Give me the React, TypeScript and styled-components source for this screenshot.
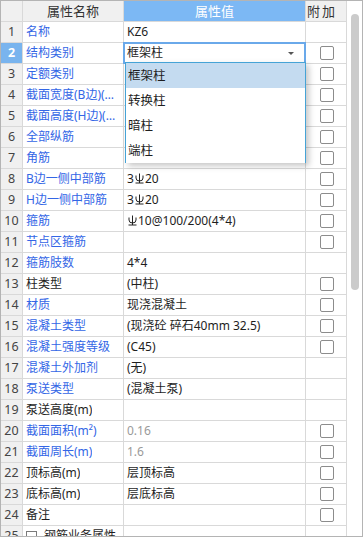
import React from 'react';
import styled, { createGlobalStyle } from 'styled-components';

const GlobalStyle = createGlobalStyle`
  html, body { margin: 0; padding: 0; background: #fff; }
  body {
    font-family: "Noto Sans", "Noto Sans CJK SC", sans-serif;
    font-size: 12px;
  }
  * { box-sizing: border-box; }
`;

const Frame = styled.div`
  position: relative;
  width: 363px;
  height: 537px;
  border: 1px solid #b4b4b4;
  display: flex;
  overflow: hidden;
  background: #fff;
`;

const Grid = styled.div`
  display: grid;
  grid-template-columns: 21px 100px 181px 40px;
  grid-auto-rows: 20px;
  gap: 1px;
  align-content: start;
  background: #d9d9d9;
  border-right: 1px solid #d9d9d9;
  flex: none;
`;

const Cell = styled.div`
  position: relative;
  background: #fff;
  line-height: 20px;
  white-space: nowrap;
  overflow: hidden;
  text-overflow: ellipsis;
  color: #1e1e1e;
`;

const HeaderCell = styled(Cell)<{ $accent?: boolean; $wide?: boolean }>`
  background: ${(p) => (p.$accent ? '#7cb8f4' : '#f0f0f0')};
  color: ${(p) => (p.$accent ? '#fff' : '#333')};
  font-size: 13px;
  text-align: ${(p) => (p.$wide ? 'left' : 'center')};
  padding-left: ${(p) => (p.$wide ? '1px' : '0')};
  letter-spacing: ${(p) => (p.$wide ? '2px' : '0')};
`;

const IndexCell = styled(Cell)<{ $selected?: boolean }>`
  background: ${(p) => (p.$selected ? '#79b4ee' : '#f0f0f0')};
  color: ${(p) => (p.$selected ? '#fff' : '#444')};
  font-weight: ${(p) => (p.$selected ? 700 : 400)};
  text-align: center;
  font-size: 12.5px;
`;

const NameCell = styled(Cell)<{ $blue?: boolean }>`
  padding: 0 3px;
  color: ${(p) => (p.$blue ? '#3366e6' : '#1e1e1e')};
  display: flex;
  align-items: center;
  gap: 7px;
`;

const NameText = styled.span`
  overflow: hidden;
  text-overflow: ellipsis;
  white-space: nowrap;
`;

const ValueCell = styled(Cell)<{ $muted?: boolean }>`
  padding: 0 3px;
  color: ${(p) => (p.$muted ? '#9a9a9a' : '#1e1e1e')};
`;

const ComboCell = styled(Cell)`
  overflow: visible;
  z-index: 1;
  padding: 0 3px;
  box-shadow: 0 0 0 1px #6aa9ea, inset 0 0 0 1px #6aa9ea;
  &::after {
    content: '';
    position: absolute;
    right: 11px;
    top: 9px;
    border-left: 3px solid transparent;
    border-right: 3px solid transparent;
    border-top: 3px solid #555;
  }
`;

const CheckCell = styled(Cell)`
  display: flex;
  align-items: center;
  justify-content: center;
  padding-left: 1px;
`;

const CheckBox = styled.span`
  width: 14px;
  height: 14px;
  border: 1px solid #8c8c8c;
  border-radius: 2px;
  background: #fff;
`;

const Collapse = styled.span`
  width: 11px;
  height: 11px;
  border: 1px solid #7a7a7a;
  position: relative;
  flex: none;
  &::after {
    content: '';
    position: absolute;
    left: 2px;
    right: 2px;
    top: 4px;
    height: 1px;
    background: #444;
  }
`;

const ScrollTrack = styled.div`
  flex: 1;
  background: #fff;
  padding: 13px 0 0 4px;
`;

const Thumb = styled.div`
  width: 8px;
  height: 276px;
  border-radius: 4px;
  background: #cbcbcb;
`;

const Dropdown = styled.div`
  position: absolute;
  left: 124px;
  top: 61px;
  width: 181px;
  height: 101px;
  border: 1px solid #45a3d6;
  background: #fff;
  z-index: 2;
  box-shadow: 3px 3px 6px rgba(0, 0, 0, 0.22);
`;

const Option = styled.div<{ $active?: boolean }>`
  height: 25px;
  line-height: 25px;
  padding-left: 2px;
  font-size: 12.5px;
  color: #1e1e1e;
  background: ${(p) => (p.$active ? '#c4dbf0' : '#fff')};
`;

const RebarSvg = styled.svg`
  display: inline-block;
  vertical-align: -1px;
  margin: 0 1px 0 1px;
`;

const Rebar = () => (
  <RebarSvg width="9" height="11" viewBox="0 0 9 11" fill="none" stroke="#222" strokeWidth="1">
    <path d="M4.5 0.5V10" />
    <path d="M1 2.5V5Q1 8 4.5 8Q8 8 8 5V2.5" />
    <path d="M0.5 10H8.5" />
  </RebarSvg>
);

type Row = {
  name: React.ReactNode;
  blue?: boolean;
  value?: React.ReactNode;
  muted?: boolean;
  check?: boolean;
  combo?: boolean;
  group?: boolean;
};

const rows: Row[] = [
  { name: '名称', blue: true, value: 'KZ6' },
  { name: '结构类别', blue: true, combo: true, value: '框架柱', check: true },
  { name: '定额类别', blue: true, value: '', check: true },
  { name: '截面宽度(B边)(mm)', blue: true, value: '', check: true },
  { name: '截面高度(H边)(mm)', blue: true, value: '', check: true },
  { name: '全部纵筋', blue: true, value: '', check: true },
  { name: '角筋', blue: true, value: '', check: true },
  { name: 'B边一侧中部筋', blue: true, value: <>3<Rebar />20</>, check: true },
  { name: 'H边一侧中部筋', blue: true, value: <>3<Rebar />20</>, check: true },
  { name: '箍筋', blue: true, value: <> <Rebar />10@100/200(4*4)</>, check: true },
  { name: '节点区箍筋', blue: true, value: '', check: true },
  { name: '箍筋肢数', blue: true, value: '4*4' },
  { name: '柱类型', value: '(中柱)', check: true },
  { name: '材质', blue: true, value: '现浇混凝土', check: true },
  { name: '混凝土类型', blue: true, value: '(现浇砼 碎石40mm 32.5)', check: true },
  { name: '混凝土强度等级', blue: true, value: '(C45)', check: true },
  { name: '混凝土外加剂', blue: true, value: '(无)' },
  { name: '泵送类型', blue: true, value: '(混凝土泵)' },
  { name: '泵送高度(m)', value: '' },
  { name: '截面面积(m²)', blue: true, value: '0.16', muted: true, check: true },
  { name: '截面周长(m)', blue: true, value: '1.6', muted: true, check: true },
  { name: '顶标高(m)', value: '层顶标高', check: true },
  { name: '底标高(m)', value: '层底标高', check: true },
  { name: '备注', value: '', check: true },
  { name: '钢筋业务属性', group: true },
];

const options = ['框架柱', '转换柱', '暗柱', '端柱'];

export default function App() {
  return (
    <>
      <GlobalStyle />
      <Frame>
        <Grid>
          <HeaderCell />
          <HeaderCell>属性名称</HeaderCell>
          <HeaderCell $accent>属性值</HeaderCell>
          <HeaderCell $wide>附加</HeaderCell>
          {rows.map((r, i) => (
            <React.Fragment key={i}>
              <IndexCell $selected={r.combo}>{i + 1}</IndexCell>
              <NameCell $blue={r.blue}>
                {r.group && <Collapse />}
                <NameText>{r.name}</NameText>
              </NameCell>
              {r.combo ? (
                <ComboCell>{r.value}</ComboCell>
              ) : (
                <ValueCell $muted={r.muted}>{r.value}</ValueCell>
              )}
              <CheckCell>{r.check && <CheckBox />}</CheckCell>
            </React.Fragment>
          ))}
        </Grid>
        <ScrollTrack>
          <Thumb />
        </ScrollTrack>
        <Dropdown>
          {options.map((o, i) => (
            <Option key={o} $active={i === 0}>
              {o}
            </Option>
          ))}
        </Dropdown>
      </Frame>
    </>
  );
}
